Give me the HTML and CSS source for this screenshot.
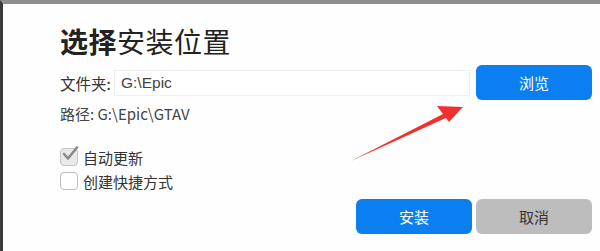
FILE: index.html
```html
<!DOCTYPE html>
<html lang="zh-CN">
<head>
  <meta charset="UTF-8" />
  <title>选择安装位置</title>
  <link rel="stylesheet" href="styles.css">
</head>
<body>
  <div class="frame">
    <div class="dialog">
      <h1 class="title"><span class="strong">选择</span>安装位置</h1>

      <div class="folder-row">
        <label class="label" for="folder">文件夹:</label>
        <input type="text" id="folder" class="path-input" value="G:\Epic" />
        <button class="btn btn-blue">浏览</button>
      </div>
      <p class="path">路径: G:\Epic\GTAV</p>

      <div class="options">
        <label class="check-row">
          <span class="box checked">
            <svg width="20" height="18" viewBox="0 0 20 18">
              <path d="M4 9 L8 13.5 L17 2.5" fill="none" stroke="#8a8a8a" stroke-width="2.6" stroke-linecap="round" stroke-linejoin="round"/>
            </svg>
          </span>
          自动更新
        </label>
        <label class="check-row">
          <span class="box"></span>
          创建快捷方式
        </label>
      </div>

      <div class="actions">
        <button class="btn btn-blue">安装</button>
        <button class="btn btn-gray">取消</button>
      </div>
    </div>

    <svg class="arrow" width="600" height="251" viewBox="0 0 600 251">
      <polygon points="351,161 446,112.5 448,117" fill="#f0302e"/>
      <polygon points="463,107 437,106 449,122" fill="#f0302e"/>
    </svg>
  </div>
</body>
</html>
```

FILE: styles.css
```css
* {
  margin: 0;
  padding: 0;
  box-sizing: border-box;
}
body {
  width: 600px;
  height: 251px;
  overflow: hidden;
  background: #ffffff;
  font-family: "Noto Sans CJK SC", "Liberation Sans", sans-serif;
  color: #333;
}
.frame {
  position: relative;
  height: 251px;
  border-top: 4px solid #8e8e8e;
  border-left: 3px solid #3a3a3a;
  background: #fefefe;
}
.dialog {
  padding: 19px 8px 0 57px;
}
.title {
  font-size: 28px;
  font-weight: 400;
  line-height: 36px;
  color: #222;
  letter-spacing: 0.5px;
}
.title .strong {
  font-weight: 600;
}
.folder-row {
  display: flex;
  align-items: center;
  margin-top: 6px;
}
.label {
  font-size: 15.5px;
  color: #333;
  width: 54px;
}
.path-input {
  width: 356px;
  height: 26px;
  border: 1px solid #f0f0f0;
  padding: 0 6px;
  font-family: "Liberation Sans", sans-serif;
  font-size: 15.5px;
  color: #444;
  outline: none;
  margin-right: 6px;
}
.btn {
  width: 116px;
  height: 35px;
  border: none;
  border-radius: 6px;
  font-family: "Noto Sans CJK SC", sans-serif;
  font-size: 15px;
  cursor: pointer;
}
.btn-blue {
  background: #0b7ff0;
  color: #ffffff;
}
.btn-gray {
  background: #bdbdbd;
  color: #333;
}
.path {
  font-size: 15px;
  color: #444;
  margin-top: 3px;
}
.options {
  display: flex;
  flex-direction: column;
  gap: 4px;
  margin-top: 23px;
}
.check-row {
  display: flex;
  align-items: center;
  gap: 5px;
  font-size: 15px;
  color: #333;
  height: 20px;
}
.box {
  position: relative;
  width: 18px;
  height: 18px;
  border: 1.5px solid #bdbdbd;
  border-radius: 4px;
  background: #fff;
}
.box.checked {
  background: #e9e9e9;
  border-color: #c4c4c4;
}
.box svg {
  position: absolute;
  left: -1px;
  top: -4px;
}
.actions {
  display: flex;
  justify-content: flex-end;
  gap: 4px;
  margin-top: 8px;
}
.arrow {
  position: absolute;
  left: -3px;
  top: -4px;
  pointer-events: none;
}
```
